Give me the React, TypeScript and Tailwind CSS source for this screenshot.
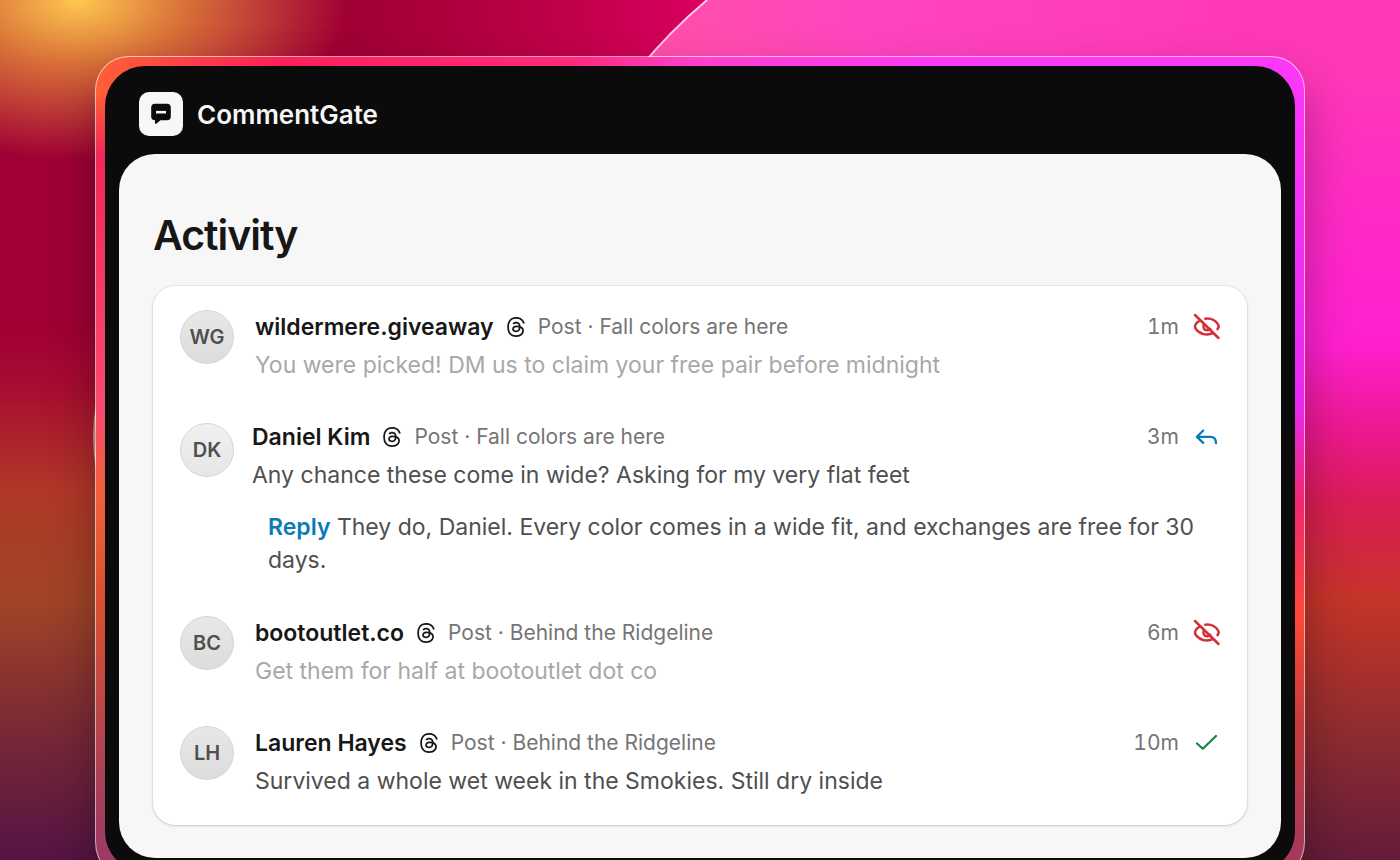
import { SiThreads } from 'react-icons/si';

type Status = 'hidden' | 'replied' | 'approved';

interface Comment {
  id: number;
  initials: string;
  name: string;
  post: string;
  text: string;
  time: string;
  status: Status;
  reply?: string;
}

const comments: Comment[] = [
  {
    id: 1,
    initials: 'WG',
    name: 'wildermere.giveaway',
    post: 'Fall colors are here',
    text: 'You were picked! DM us to claim your free pair before midnight',
    time: '1m',
    status: 'hidden',
  },
  {
    id: 2,
    initials: 'DK',
    name: 'Daniel Kim',
    post: 'Fall colors are here',
    text: 'Any chance these come in wide? Asking for my very flat feet',
    time: '3m',
    status: 'replied',
    reply:
      'They do, Daniel. Every color comes in a wide fit, and exchanges are free for 30 days.',
  },
  {
    id: 3,
    initials: 'BC',
    name: 'bootoutlet.co',
    post: 'Behind the Ridgeline',
    text: 'Get them for half at bootoutlet dot co',
    time: '6m',
    status: 'hidden',
  },
  {
    id: 4,
    initials: 'LH',
    name: 'Lauren Hayes',
    post: 'Behind the Ridgeline',
    text: 'Survived a whole wet week in the Smokies. Still dry inside',
    time: '10m',
    status: 'approved',
  },
];

function StatusIcon({ status }: { status: Status }) {
  if (status === 'hidden') {
    return (
      <svg
        viewBox="0 0 28 28"
        className="size-7 text-[#d42f35]"
        fill="none"
        stroke="currentColor"
        strokeWidth="2.5"
        strokeLinecap="round"
        role="img"
        aria-label="Hidden"
      >
        <path d="M2 2 25.500 25" />
        <path d="M12.200 5.700C19 4.900 23.500 8.300 25.300 11.800c.7 1.400.5 2.800-.8 4.300" />
        <path d="M7 7.500C4.200 9 2 11.500 2 13.500c0 2.800 5 8 12 8 2.300 0 4.200-.4 5.800-1.300" />
        <path d="M11 11c-1.700 3.200.2 6.200 3.200 6.200 1.300 0 2.300-.5 3-1.300" />
      </svg>
    );
  }
  if (status === 'replied') {
    return (
      <svg
        viewBox="0 0 28 28"
        className="size-7 text-[#0a7ab8]"
        fill="none"
        stroke="currentColor"
        strokeWidth="2.3"
        strokeLinecap="round"
        strokeLinejoin="round"
        role="img"
        aria-label="Replied"
      >
        <path d="M10.200 7.500 4 13.800l6.200 6" />
        <path d="M4 13.800H17.500c4 0 5.500 2 5.500 6.500" />
      </svg>
    );
  }
  return (
    <svg
      viewBox="0 0 28 28"
      className="size-7 text-[#148548]"
      fill="none"
      stroke="currentColor"
      strokeWidth="2.2"
      strokeLinecap="round"
      strokeLinejoin="round"
      role="img"
      aria-label="Approved"
    >
      <path d="M4 14.500 9.800 19.800 23 7" />
    </svg>
  );
}

function Backdrop() {
  return (
    <div className="absolute inset-0 bg-[linear-gradient(to_bottom,#a00034_0%,#a00034_38%,#a80c30_45%,#b03828_57%,#a04428_70%,#7c2a34_84%,#541444_100%)]">
      <div className="absolute inset-y-0 right-0 w-1/2 bg-[linear-gradient(to_bottom,#ff38b8_0%,#ff38b8_8%,#ff2cc4_22%,#ff20d0_40%,#ec1890_50%,#dc1c58_58%,#c43428_70%,#8c2c30_86%,#641c38_100%)]" />
      <div className="absolute inset-x-0 top-0 h-14 bg-[linear-gradient(to_right,#a00034_0%,#a00034_26%,#c4004c_42%,#d80060_50%,#ff40c0_65%,#ff38b8_88%)]" />
      <div className="absolute -top-40 -left-48 h-80 w-[540px] bg-[radial-gradient(closest-side,#ffc850,#d87038_40%,#d8703800)]" />
      <svg className="absolute inset-0 size-full" aria-hidden="true">
        <defs>
          <linearGradient id="petal" x1="0" y1="0" x2="1" y2="0">
            <stop offset="0" stopColor="#ff50a8" />
            <stop offset="0.4" stopColor="#ff44c0" />
            <stop offset="1" stopColor="#ff38b8" />
          </linearGradient>
        </defs>
        <path d="M640 68Q669 32 707 0H1240V68Z" fill="url(#petal)" />
        <path d="M640 68Q669 32 707 0" fill="none" stroke="#ffc8e8" strokeWidth="2" />
        <circle cx="274" cy="437" r="180" fill="none" stroke="#d09088" strokeWidth="2" />
      </svg>
    </div>
  );
}

function CommentRow({ comment }: { comment: Comment }) {
  return (
    <li className={`flex ${comment.reply ? 'gap-[18px]' : 'gap-[21px]'}`}>
      <span
        className={`flex size-[54px] shrink-0 items-center justify-center rounded-full border border-[#d6d6d6] bg-linear-to-b text-xl font-semibold text-[#4f4f4f] ${
          comment.reply ? 'mt-0.5 from-[#f0f0f0] to-[#e6e6e6]' : '-mt-px from-[#e8e8e8] to-[#dcdcdc]'
        }`}
      >
        {comment.initials}
      </span>
      <div className="min-w-0 flex-1">
        <div className="flex h-8 items-center">
          <h2 className="text-[23px] font-semibold text-[#171717]">{comment.name}</h2>
          <SiThreads className="mx-3 size-5 text-[#171717]" />
          <p className="text-[21px] text-[#757575]">Post · {comment.post}</p>
          <time className="ml-auto text-[21px] text-[#757575] tabular-nums">{comment.time}</time>
          <span className="ml-3.5">
            <StatusIcon status={comment.status} />
          </span>
        </div>
        <p
          className={`mt-1 text-[23px] leading-9 ${
            comment.status === 'hidden' ? 'text-[#a8a8a8]' : 'text-[#4f4f4f]'
          }`}
        >
          {comment.text}
        </p>
        {comment.reply && (
          <p className="mt-[18px] mb-0.5 pl-4 text-[23px] leading-[33px] text-[#4f4f4f]">
            <span className="font-semibold text-[#0a7ab8]">Reply</span> {comment.reply}
          </p>
        )}
      </div>
    </li>
  );
}

export default function App() {
  return (
    <main className="relative h-screen overflow-hidden px-[95px] pt-14 font-['Inter',sans-serif]">
      <Backdrop />
      <div className="relative rounded-t-[34px] rounded-b-[40px] border border-[#ffffffa0] p-[9px] shadow-[0_24px_48px_#00000050] [background:linear-gradient(to_right,#ff6035,#ff2058_15%,#ff2a80_40%,#ff40d0_50%,#fc38f8_70%)_top/100%_40px_no-repeat,linear-gradient(#ff6035,#ff6035_4%,#f02858_12%,#f84a70_42%,#f0603c_53%,#d85030_66%,#a84058_88%,#983868)_left/50%_100%_no-repeat,linear-gradient(#fc38f8,#e828f0_42%,#f02870_54%,#ff4838_68%,#c83c38_80%,#a03860)_right/50%_100%_no-repeat]">
        <div className="rounded-[40px] bg-[#0b0b0b] px-3.5 pb-3.5">
          <header className="flex h-[88px] items-center gap-3.5 px-5 pt-2">
            <span className="flex size-11 items-center justify-center rounded-[10px] bg-[#f7f7f7]">
              <svg viewBox="0 0 22 22" className="size-[22px]" aria-hidden="true">
                <path
                  d="M5 .8h12a3.800 3.800 0 0 1 3.800 3.800v8.800a3.800 3.800 0 0 1-3.800 3.800h-6.500L6.200 20.700c-.6.500-1.200.1-1.200-.6v-2.900a3.800 3.800 0 0 1-3.800-3.800V4.600A3.800 3.800 0 0 1 5 .8Z"
                  fill="#0b0b0b"
                />
                <path d="M6 9.200h10" stroke="#f7f7f7" strokeWidth="2.6" />
              </svg>
            </span>
            <span className="text-[26px] font-semibold text-[#f7f7f7]">CommentGate</span>
          </header>
          <div className="rounded-[36px] bg-[#f7f7f7] px-[34px] pt-14 pb-[33px]">
            <h1 className="text-[41px] leading-[50px] font-semibold tracking-tight text-[#171717]">
              Activity
            </h1>
            <ul className="mt-[26px] space-y-[38px] rounded-[22px] bg-white pt-[25px] pr-[26px] pb-[26px] pl-[27px] shadow-[0_0_0_1px_#0000000d,0_1px_3px_#00000026]">
              {comments.map((comment) => (
                <CommentRow key={comment.id} comment={comment} />
              ))}
            </ul>
          </div>
        </div>
      </div>
    </main>
  );
}
